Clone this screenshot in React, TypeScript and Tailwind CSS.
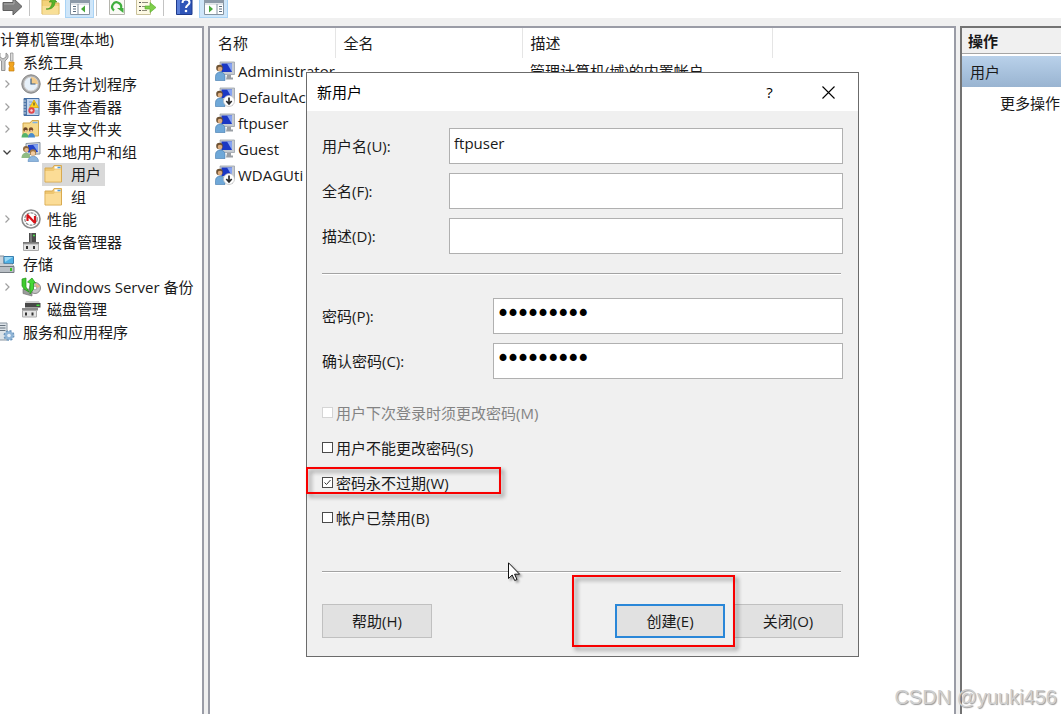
import type { ReactNode } from "react";

const FONT =
  "font-['Open_Sans','Noto_Sans_CJK_SC',sans-serif]";

/* ---------- toolbar icons ---------- */

function ForwardIcon() {
  return (
    <svg width="21" height="18" viewBox="0 0 21 18">
      <path d="M1 2.500h10V-2l9 8.500-9 8.500v-4.500H1z" fill="#808080" stroke="#5f5f5f" />
      <path d="M2 4h10V1" fill="none" stroke="#a9a9a9" />
    </svg>
  );
}

function FolderUpIcon() {
  return (
    <svg width="19" height="18" viewBox="0 0 19 18">
      <path d="M1 0h11l2 3h4v11H1z" fill="#f3d27a" stroke="#d9b354" />
      <path d="M1.500 6h16v8h-16z" fill="#f8df97" />
      <path d="M5 9c4 0 6-3 6-7H8l4-4 4 4h-2c0 5-4 8-9 7z" fill="#57b32b" stroke="#3b8f17" strokeWidth=".6" />
    </svg>
  );
}

function PaneIcon({ flip = false }: { flip?: boolean }) {
  return (
    <svg width="20" height="18" viewBox="0 0 20 18">
      <path d="M.5-2h19v16.500H.5z" fill="#fff" stroke="#8593a1" />
      <path d="M0-2h20v5H0z" fill="#8d9aa8" />
      <path d="M1 4h18" stroke="#c4ccd4" />
      <path d={flip ? "M13 4v10" : "M8 4v10"} stroke="#8593a1" />
      {flip ? (
        <>
          <path d="M5 5.500v7l4-3.500z" fill="#48a839" />
          <path d="M15 6.500h3M15 9h3M15 11.500h3" stroke="#5a6d80" />
        </>
      ) : (
        <>
          <path d="M15 5.500v7L11 9z" fill="#48a839" />
          <path d="M3 6.500h3M3 9h3M3 11.500h3" stroke="#5a6d80" />
        </>
      )}
    </svg>
  );
}

function RefreshIcon() {
  return (
    <svg width="17" height="18" viewBox="0 0 17 18">
      <path d="M.5-2h15v16.500H.5z" fill="#fafaf5" stroke="#b5b5ad" />
      <path d="M5 10.500A4.500 4.500 0 1 1 12 8" fill="none" stroke="#3fae3c" strokeWidth="2.200" />
      <path d="M8 8h6.500v5z" fill="#3fae3c" />
    </svg>
  );
}

function ExportIcon() {
  return (
    <svg width="21" height="18" viewBox="0 0 21 18">
      <path d="M.5-2h14v16.500H.5z" fill="#fdf9e4" stroke="#c9c19b" />
      <path d="M3 2.500h2M3 6.500h2M3 10.500h2" stroke="#555" />
      <path d="M6 2.500h6M6 6.500h4M6 10.500h5" stroke="#8d8a78" />
      <path d="M9 6h5V2.500l6 5-6 5V9H9z" fill="#7fcf4a" stroke="#54a829" strokeWidth=".6" />
    </svg>
  );
}

function HelpIcon() {
  return (
    <svg width="17" height="18" viewBox="0 0 17 18">
      <path d="M.5-2h15.500v16.500H.5z" fill="#2f55b8" stroke="#1f3b8c" />
      <path d="M1-2h3v16H1z" fill="#5b7fd8" />
      <path d="M6.500 3c0-5 7-4 7-.5 0 2.500-3.500 2.500-3.500 5.500" fill="none" stroke="#fff" strokeWidth="2" />
      <circle cx="10" cy="11" r="1.300" fill="#fff" />
    </svg>
  );
}

/* ---------- tree icons ---------- */

function ToolsIcon() {
  return (
    <svg width="20" height="20" viewBox="0 0 20 20">
      <path d="M5 1v4l3 2 3-2V1c2 1 3 4 1 6l-2 2v9.500H6.500V9C3 7 3 3 5 1z" fill="#c9c9c9" stroke="#808080" strokeWidth=".8" />
      <path d="M15.500 1h2.500v8h-2.500z" fill="#ddd" stroke="#888" strokeWidth=".7" />
      <path d="M14 10h5v3l-1 1 1 2v3h-5v-3l1-2-1-1z" fill="#f2a51f" stroke="#c37b0d" strokeWidth=".7" />
    </svg>
  );
}

function ClockIcon() {
  return (
    <svg width="20" height="20" viewBox="0 0 20 20">
      <circle cx="10" cy="10" r="9.200" fill="#a8a8a8" stroke="#858585" />
      <circle cx="10" cy="10" r="7" fill="#e7f1fa" stroke="#d4d4d4" />
      <path d="M10 3a7 7 0 0 1 7 7h-7z" fill="#f3cb8b" />
      <path d="M10 4.500V10h4.500" fill="none" stroke="#3b5f85" strokeWidth="1.200" />
    </svg>
  );
}

function EventIcon() {
  return (
    <svg width="20" height="20" viewBox="0 0 20 20">
      <path d="M3 1.500h15v17H3z" fill="#c3d6ee" stroke="#456ea2" />
      <path d="M3 2h3v16H3z" fill="#5077a8" />
      <path d="M2 4h3M2 7h3M2 10h3M2 13h3M2 16h3" stroke="#c9d4e0" />
      <path d="M8 5h3M8 8h2M14 14h3M14 16h3" stroke="#7b9cc8" />
      <path d="M13 3l4.500 7.500h-9z" fill="#ffd21f" stroke="#d9a200" strokeWidth=".7" />
      <path d="M13 5.500v3" stroke="#333" />
      <circle cx="10.500" cy="13.500" r="3.200" fill="#e2464b" />
      <circle cx="10.500" cy="13.500" r="1.200" fill="#fbd5d5" />
    </svg>
  );
}

function SharedIcon() {
  return (
    <svg width="20" height="20" viewBox="0 0 20 20">
      <path d="M2 4h7l2-2.500h6.500V17H2z" fill="#f6d98b" stroke="#cfa64b" />
      <path d="M11.500 3.500h5" stroke="#7db4e8" strokeWidth="1.500" />
      <circle cx="4.500" cy="10.500" r="2.200" fill="#6b4526" />
      <circle cx="10" cy="10.500" r="2.200" fill="#7b4b2a" />
      <path d="M.5 18.500c0-6 7-6 7 0z" fill="#55b36c" />
      <path d="M7 18.500c0-6 7-6 7 0z" fill="#4b8ccc" />
      <path d="M4.800 11v2M10.300 11v2" stroke="#eec39a" strokeWidth="2" />
    </svg>
  );
}

function UsersIcon() {
  return (
    <svg width="20" height="20" viewBox="0 0 20 20">
      <path d="M5 1.500l14-1v11.500l-14 .5z" fill="#d4dae0" stroke="#8995a2" />
      <path d="M7 3l10-.7v7.700l-10 .5z" fill="#2343c9" />
      <path d="M12 2.700l5-.4v7.700z" fill="#7fa1f0" />
      <circle cx="5" cy="7" r="3" fill="#8b673d" />
      <circle cx="5.500" cy="8" r="2.100" fill="#edbd8d" />
      <path d="M.5 16c0-7 9-7 9 0z" fill="#8fbb83" />
      <circle cx="12" cy="10.500" r="3.200" fill="#a47a45" />
      <circle cx="12" cy="11.500" r="2.200" fill="#f3cda3" />
      <path d="M7 19.500c0-7 10.500-7 10.500 0z" fill="#8db6de" stroke="#5a8abd" strokeWidth=".6" />
    </svg>
  );
}

function FolderIcon() {
  return (
    <svg width="20" height="20" viewBox="0 0 20 20">
      <path d="M2 4h7.500L11 1.500h7.500V18H2z" fill="#eec671" stroke="#d8aa50" />
      <path d="M11.500 3.500h6" stroke="#fff" strokeWidth="2.200" />
      <path d="M14.500 3.500h3" stroke="#4a9be0" strokeWidth="1.500" />
      <path d="M2.500 7h8l1.500-1.500h6v12H2.500z" fill="#fbdc96" />
    </svg>
  );
}

function PerfIcon() {
  return (
    <svg width="20" height="20" viewBox="0 0 20 20">
      <circle cx="10" cy="10" r="9" fill="#fff" stroke="#8a8a8a" strokeWidth="1.600" />
      <circle cx="10" cy="10" r="6.200" fill="none" stroke="#888" strokeWidth="1.200" strokeDasharray="3 1" />
      <path d="M6.500 12V5.500M6 5.500l8 8.500M14 7v7" fill="none" stroke="#d7141a" strokeWidth="2.200" />
    </svg>
  );
}

function DeviceIcon() {
  return (
    <svg width="20" height="20" viewBox="0 0 20 20">
      <path d="M8 1h7v10H8z" fill="#4c4c4c" />
      <path d="M9 1h2v9H9z" fill="#787878" />
      <path d="M12 3.500h2" stroke="#46e046" strokeWidth="1.500" />
      <path d="M2 10h16v2H2z" fill="#777" />
      <path d="M2.500 12h15v6.500h-15z" fill="#e4e4e4" stroke="#aaa" />
      <path d="M5 14h2v3H5zM12 14h2v3h-2z" fill="#333" />
    </svg>
  );
}

function StorageIcon() {
  return (
    <svg width="20" height="20" viewBox="0 0 20 20">
      <path d="M1 2h8v9H1z" fill="#cdd3d9" stroke="#87919b" />
      <path d="M9 2.500h9.500v7H9z" fill="#4fb0e4" stroke="#3a7fae" />
      <path d="M9.500 3h8.500l-8 5z" fill="#9ad8f5" />
      <path d="M2 12l2-2h13l2 2z" fill="#dfe3e6" stroke="#9a9fa4" strokeWidth=".6" />
      <path d="M1.500 12.500h17.500v6H1.500z" fill="#b8bec4" stroke="#747b82" />
      <path d="M15 14h2v3h-2z" fill="#39c22b" />
    </svg>
  );
}

function BackupIcon() {
  return (
    <svg width="20" height="20" viewBox="0 0 20 20">
      <circle cx="14" cy="11" r="5.500" fill="#c3c3c3" stroke="#8b8b8b" />
      <path d="M14 5.500l5 4-4 2z" fill="#e7b38a" />
      <circle cx="14" cy="11" r="1.800" fill="#fff" stroke="#888" strokeWidth=".6" />
      <path d="M2 12h9v7l-9-2.500z" fill="#9a9a9a" stroke="#6d6d6d" strokeWidth=".6" />
      <path d="M1 2l4-1v9l3 5-5-3-2-3z" fill="#3fcb2e" stroke="#23941a" strokeWidth=".7" />
      <path d="M6.500 5l4.500-4 3.500 5h-2v6l-3.500 5V6z" fill="#45d934" stroke="#23941a" strokeWidth=".7" />
    </svg>
  );
}

function DiskIcon() {
  return (
    <svg width="20" height="20" viewBox="0 0 20 20">
      <path d="M5 2h13l1 2H4z" fill="#cfcfcf" />
      <path d="M4 4h15.500v4.500H4z" fill="#484848" />
      <path d="M15.500 6.300h3" stroke="#3fe03a" strokeWidth="1.500" />
      <path d="M1 9h16v2.500H1z" fill="#8a8a8a" />
      <path d="M1.500 11.500h14v6.500h-14z" fill="#e4e4e4" stroke="#aaa" />
      <path d="M4 13.500h2v3H4zM10.500 13.500h2v3h-2z" fill="#333" />
    </svg>
  );
}

function ServicesIcon() {
  return (
    <svg width="20" height="20" viewBox="0 0 20 20">
      <path d="M3 1h9v17H3z" fill="#dde3e8" stroke="#8a96a1" />
      <path d="M4.500 3.500h6M4.500 6h6M4.500 8.500h6" stroke="#66727e" />
      <circle cx="14" cy="13.500" r="4.500" fill="#a9c6e0" stroke="#6b95bc" strokeWidth="2" strokeDasharray="2 1.530" />
      <circle cx="14" cy="13.500" r="4" fill="#8fb4d6" />
      <circle cx="14" cy="13.500" r="1.800" fill="#e8f0f8" />
    </svg>
  );
}

function AccountIcon({ disabled = false }: { disabled?: boolean }) {
  return (
    <svg width="20" height="20" viewBox="0 0 20 20" className="shrink-0">
      <path d="M5 1h14.500v12.500H6z" fill="#c6cbd1" stroke="#9aa1a9" strokeWidth=".8" />
      <path d="M6.500 2.500h10.500v8.500H6.500z" fill="#1b38c4" />
      <path d="M12 2.500h5v8.500z" fill="#86a3f2" />
      <path d="M12 14h4v2.500h2v2h-7z" fill="#9a9fa5" />
      <circle cx="4.500" cy="7" r="3.300" fill="#6e5233" />
      <circle cx="5" cy="8" r="2.300" fill="#dfae7f" />
      <path d="M.5 19.500v-4c0-6 9.500-6 9.500 0v4z" fill="#6fa8d8" stroke="#3f77ab" strokeWidth=".6" />
      {disabled && (
        <>
          <circle cx="14" cy="14" r="5.500" fill="#fff" stroke="#bbb" strokeWidth=".7" />
          <path d="M14 10.500v6M11.300 14l2.700 3 2.700-3" fill="none" stroke="#2b2b2b" strokeWidth="1.700" />
        </>
      )}
    </svg>
  );
}

/* ---------- data ---------- */

type TreeNode = {
  label: string;
  level: 0 | 1 | 2 | 3;
  icon?: ReactNode;
  state?: "open" | "closed";
  selected?: boolean;
};

const TREE: TreeNode[] = [
  { label: "计算机管理(本地)", level: 0 },
  { label: "系统工具", level: 1, icon: <ToolsIcon /> },
  { label: "任务计划程序", level: 2, icon: <ClockIcon />, state: "closed" },
  { label: "事件查看器", level: 2, icon: <EventIcon />, state: "closed" },
  { label: "共享文件夹", level: 2, icon: <SharedIcon />, state: "closed" },
  { label: "本地用户和组", level: 2, icon: <UsersIcon />, state: "open" },
  { label: "用户", level: 3, icon: <FolderIcon />, selected: true },
  { label: "组", level: 3, icon: <FolderIcon /> },
  { label: "性能", level: 2, icon: <PerfIcon />, state: "closed" },
  { label: "设备管理器", level: 2, icon: <DeviceIcon /> },
  { label: "存储", level: 1, icon: <StorageIcon /> },
  { label: "Windows Server 备份", level: 2, icon: <BackupIcon />, state: "closed" },
  { label: "磁盘管理", level: 2, icon: <DiskIcon /> },
  { label: "服务和应用程序", level: 1, icon: <ServicesIcon /> },
];

const ACCOUNTS = [
  { name: "Administrator", description: "管理计算机(域)的内置帐户" },
  { name: "DefaultAc", disabled: true },
  { name: "ftpuser" },
  { name: "Guest" },
  { name: "WDAGUti", disabled: true },
];

/* ---------- main window ---------- */

function ToolButton({ label, active, children }: { label: string; active?: boolean; children: ReactNode }) {
  return (
    <button
      type="button"
      aria-label={label}
      className={`flex h-[18px] w-[29px] shrink-0 justify-center ${
        active ? "border-x border-b border-[#a9d3f5] bg-[#cfe6f9]" : ""
      }`}
    >
      {children}
    </button>
  );
}

function ToolSeparator() {
  return <div className="mr-1.5 ml-0.5 h-4 w-px shrink-0 bg-[#c3c3c3]" />;
}

function Toolbar() {
  return (
    <header className="-ml-0.5 flex h-[18px] shrink-0 overflow-hidden bg-white">
      <ToolButton label="前进"><ForwardIcon /></ToolButton>
      <ToolSeparator />
      <ToolButton label="向上"><FolderUpIcon /></ToolButton>
      <ToolButton label="控制台树" active><PaneIcon /></ToolButton>
      <ToolSeparator />
      <ToolButton label="刷新"><RefreshIcon /></ToolButton>
      <ToolButton label="导出列表"><ExportIcon /></ToolButton>
      <ToolSeparator />
      <ToolButton label="帮助"><HelpIcon /></ToolButton>
      <ToolButton label="操作窗格" active><PaneIcon flip /></ToolButton>
    </header>
  );
}

function Chevron({ state }: { state?: "open" | "closed" }) {
  return (
    <span className="flex w-[21px] shrink-0 pl-0.5">
      {state && (
        <svg width="10" height="10" viewBox="0 0 10 10" fill="none">
          {state === "open" ? (
            <path d="M1.500 3.500L5 7l3.500-3.500" stroke="#404040" strokeWidth="1.300" />
          ) : (
            <path d="M3.500 1.500L7 5 3.500 8.500" stroke="#a0a0a0" strokeWidth="1.200" />
          )}
        </svg>
      )}
    </span>
  );
}

function TreeRow({ node }: { node: TreeNode }) {
  if (node.level === 0) {
    return <li className="flex items-center">{node.label}</li>;
  }
  if (node.level === 1) {
    return (
      <li className="-ml-1 flex items-center gap-2">
        <span className="-ml-px">{node.icon}</span>
        <span>{node.label}</span>
      </li>
    );
  }
  if (node.level === 3) {
    return (
      <li className="flex pl-[42px]">
        <span className={`flex items-center gap-2 px-px pr-1 ${node.selected ? "bg-[#d9d9d9]" : ""}`}>
          {node.icon}
          <span>{node.label}</span>
        </span>
      </li>
    );
  }
  return (
    <li className="flex items-center">
      <Chevron state={node.state} />
      {node.icon}
      <span className="pl-1.5">{node.label}</span>
    </li>
  );
}

function ConsoleTree() {
  return (
    <nav className="w-[204px] shrink-0 overflow-hidden border-t-2 border-r-2 border-[#9a9ca6] bg-white">
      <ul className="grid h-[315px] auto-rows-fr whitespace-nowrap">
        {TREE.map((node) => (
          <TreeRow key={node.label} node={node} />
        ))}
      </ul>
    </nav>
  );
}

function AccountList() {
  return (
    <main className="min-w-0 flex-1 overflow-hidden border-2 border-b-0 border-[#9a9ca6] bg-white">
      <table className="w-full table-fixed border-collapse text-left whitespace-nowrap">
        <thead>
          <tr className="h-[30px]">
            <th className="w-[125px] border-r border-[#e5e5e5] pl-2 font-normal">名称</th>
            <th className="w-[187px] border-r border-[#e5e5e5] pl-2 font-normal">全名</th>
            <th className="w-[250px] border-r border-[#e5e5e5] pl-2 font-normal">描述</th>
            <th></th>
          </tr>
        </thead>
        <tbody>
          {ACCOUNTS.map((account) => (
            <tr key={account.name} className="h-[26px]">
              <td className="pl-[5px]">
                <span className="flex items-center gap-[3px]">
                  <AccountIcon disabled={account.disabled} />
                  {account.name}
                </span>
              </td>
              <td></td>
              <td className="pl-2">{account.description}</td>
              <td></td>
            </tr>
          ))}
        </tbody>
      </table>
    </main>
  );
}

function ActionsPane() {
  return (
    <aside className="w-[101px] shrink-0 overflow-hidden border-t-2 border-l-2 border-[#737373] bg-white whitespace-nowrap">
      <h2 className="flex h-[26px] items-center border-b border-[#a5a5a5] bg-[#f0f0f0] pl-1.5 font-bold">操作</h2>
      <div className="mt-0.5 flex h-[31px] items-center bg-linear-to-b from-[#b9d1ea] to-[#99b4d1] pl-2">用户</div>
      <a href="#more" className="flex h-[31px] items-center pl-[38px]">更多操作</a>
    </aside>
  );
}

/* ---------- dialog ---------- */

type FieldProps = { id: string; label: string; value?: string; secret?: boolean };

function Field({ id, label, value = "", secret }: FieldProps) {
  return (
    <div className="flex items-center">
      <label htmlFor={id} className={secret ? "w-[171px]" : "w-[127px]"}>
        {label}
      </label>
      <input
        id={id}
        type={secret ? "password" : "text"}
        defaultValue={value}
        className={`h-9 min-w-0 flex-1 border border-[#b0b0b0] bg-white px-1 pb-1.5 outline-none ${
          secret ? "font-['DejaVu_Sans'] text-[17px] text-black [-webkit-text-stroke:2px_black]" : ""
        }`}
      />
    </div>
  );
}

type OptionProps = { label: string; checked?: boolean; disabled?: boolean };

function Option({ label, checked, disabled }: OptionProps) {
  return (
    <label className={`flex h-[35px] items-center gap-[3px] ${disabled ? "text-[#838383]" : ""}`}>
      <span className="grid">
        <input
          type="checkbox"
          defaultChecked={checked}
          disabled={disabled}
          className="col-start-1 row-start-1 size-[11px] appearance-none border border-[#4a4a4a] bg-white disabled:border-[#d5d5d5]"
        />
        {checked && (
          <svg viewBox="0 0 11 11" className="pointer-events-none col-start-1 row-start-1 size-[11px]">
            <path d="M2.500 5.500l2 2 4-4.500" fill="none" stroke="#333" />
          </svg>
        )}
      </span>
      {label}
    </label>
  );
}

function Divider() {
  return <hr className="h-0.5 border-t border-b border-t-[#a3a3a3] border-b-white" />;
}

function DialogButton({ label, primary }: { label: string; primary?: boolean }) {
  return (
    <button
      type="button"
      className={`h-[34px] w-[110px] bg-[#e1e1e1] ${
        primary ? "border-2 border-[#2a87d8]" : "border border-[#c0c0c0]"
      }`}
    >
      {label}
    </button>
  );
}

function NewUserDialog() {
  return (
    <section
      role="dialog"
      aria-label="新用户"
      className="absolute top-[72px] left-[306px] w-[553px] border border-[#6b6b6b] bg-[#f0f0f0]"
    >
      <div className="flex h-[38px] items-center bg-white pl-2.5 text-black">
        <h1 className="flex-1">新用户</h1>
        <button type="button" className="w-[57px]">?</button>
        <button type="button" aria-label="关闭" className="flex w-[60px] justify-center">
          <svg width="13" height="13" viewBox="0 0 13 13">
            <path d="M.5.5l12 12M12.500.5l-12 12" stroke="#000" strokeWidth="1.100" />
          </svg>
        </button>
      </div>
      <form className="px-[15px] pt-[17px] pb-[18px]">
        <div className="flex flex-col gap-[9px]">
          <Field id="username" label="用户名(U):" value="ftpuser" />
          <Field id="fullname" label="全名(F):" />
          <Field id="description" label="描述(D):" />
        </div>
        <div className="pt-[19px] pr-0.5 pb-[23px]">
          <Divider />
        </div>
        <div className="flex flex-col gap-[9px]">
          <Field id="password" label="密码(P):" value="password1" secret />
          <Field id="confirm" label="确认密码(C):" value="password1" secret />
        </div>
        <div className="pt-4">
          <Option label="用户下次登录时须更改密码(M)" disabled />
          <Option label="用户不能更改密码(S)" />
          <Option label="密码永不过期(W)" checked />
          <Option label="帐户已禁用(B)" />
        </div>
        <div className="pt-9 pr-0.5 pb-[31px]">
          <Divider />
        </div>
        <div className="flex justify-between">
          <DialogButton label="帮助(H)" />
          <div className="flex gap-2">
            <DialogButton label="创建(E)" primary />
            <DialogButton label="关闭(O)" />
          </div>
        </div>
      </form>
    </section>
  );
}

function Pointer() {
  return (
    <svg
      className="absolute top-[562px] left-[508px] drop-shadow-[2px_2px_1px_rgba(0,0,0,0.35)]"
      width="13"
      height="20"
      viewBox="0 0 13 20"
    >
      <path d="M.5.8v15.700l3.700-3.500 2.500 5.500 2.300-1-2.400-5.300h5z" fill="#fff" stroke="#111" />
    </svg>
  );
}

export default function App() {
  return (
    <div
      className={`relative flex h-screen flex-col overflow-hidden bg-[#f0f0f0] text-[15px] leading-5 text-[#1a1a1a] ${FONT}`}
    >
      <Toolbar />
      <div className="flex min-h-0 flex-1 gap-1 pt-2">
        <ConsoleTree />
        <AccountList />
        <ActionsPane />
      </div>

      <NewUserDialog />
      <div className="pointer-events-none absolute top-[467px] left-[306px] h-[27px] w-[195px] border-2 border-[#f80000] drop-shadow-[3px_3px_2px_rgba(0,0,0,0.45)]" />
      <div className="pointer-events-none absolute top-[575px] left-[572px] h-[72px] w-[163px] border-2 border-[#f80000] drop-shadow-[3px_3px_2px_rgba(0,0,0,0.45)]" />
      <Pointer />
      <div className="absolute right-1 bottom-1 font-['Liberation_Sans',sans-serif] text-xl leading-[26px] text-[#cfcfcf] [text-shadow:1px_1px_1px_#999]">
        CSDN @yuuki456
      </div>
    </div>
  );
}
